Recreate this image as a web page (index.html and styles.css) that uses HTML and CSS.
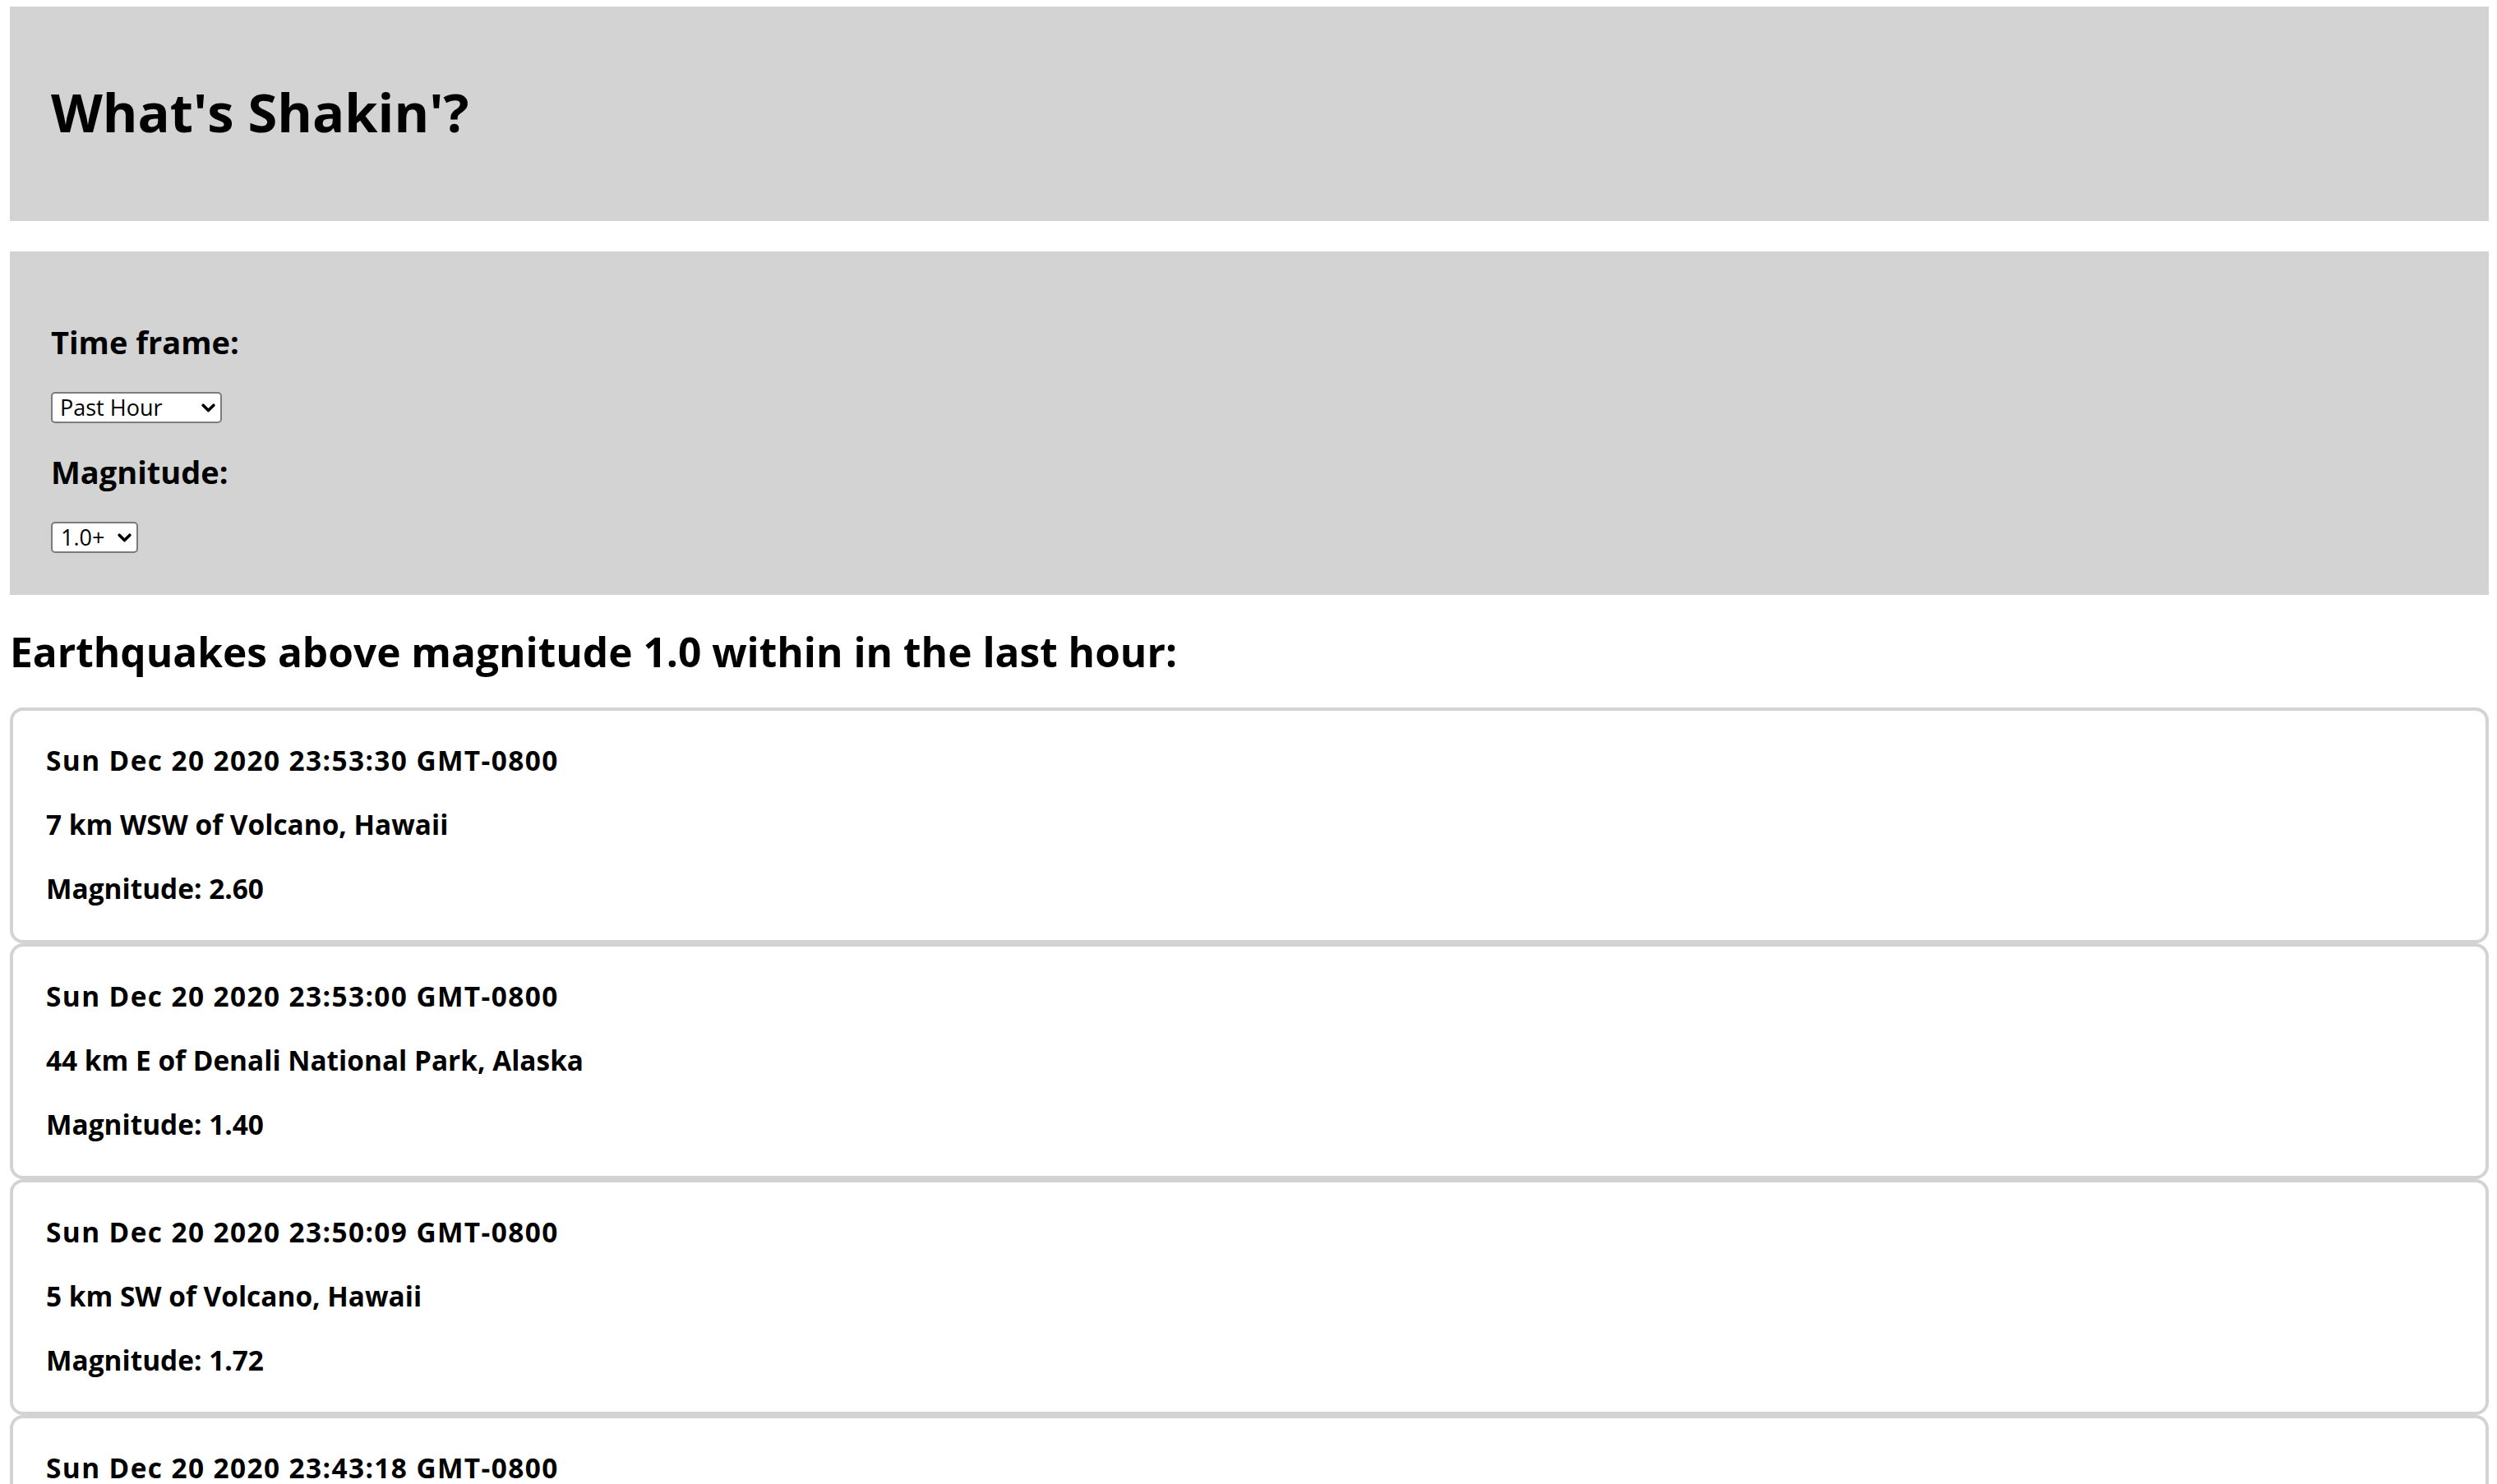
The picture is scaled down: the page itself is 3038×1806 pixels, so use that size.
FILE: index.html
```html
<!DOCTYPE html>
<html lang="en">
<head>
<meta charset="utf-8">
<title>What's Shakin'?</title>
<link rel="stylesheet" href="styles.css">
</head>
<body>
<header class="masthead">
  <h1 class="title">What's Shakin'?</h1>
</header>

<section class="controls">
  <h3 class="label">Time frame:</h3>
  <div class="select-wrap">
    <select class="sel sel-time">
      <option>Past Hour</option>
      <option>Past Day</option>
      <option>Past Week</option>
      <option>Past Month</option>
    </select>
    <svg class="chev" viewBox="0 0 17 11" width="17" height="11"><path d="M2.2 2.2 L8.5 8.5 L14.8 2.2" fill="none" stroke="#000" stroke-width="3.6" stroke-linecap="round" stroke-linejoin="round"/></svg>
  </div>
  <h3 class="label">Magnitude:</h3>
  <div class="select-wrap">
    <select class="sel sel-mag">
      <option>1.0+</option>
      <option>2.5+</option>
      <option>4.5+</option>
    </select>
    <svg class="chev" viewBox="0 0 17 11" width="17" height="11"><path d="M2.2 2.2 L8.5 8.5 L14.8 2.2" fill="none" stroke="#000" stroke-width="3.6" stroke-linecap="round" stroke-linejoin="round"/></svg>
  </div>
</section>

<h2 class="results-title">Earthquakes above magnitude 1.0 within in the last hour:</h2>

<ul class="quakes">
  <li class="quake">
    <p class="line when">Sun Dec 20 2020 23:53:30 GMT-0800</p>
    <p class="line">7 km WSW of Volcano, Hawaii</p>
    <p class="line">Magnitude: 2.60</p>
  </li>
  <li class="quake">
    <p class="line when">Sun Dec 20 2020 23:53:00 GMT-0800</p>
    <p class="line">44 km E of Denali National Park, Alaska</p>
    <p class="line">Magnitude: 1.40</p>
  </li>
  <li class="quake">
    <p class="line when">Sun Dec 20 2020 23:50:09 GMT-0800</p>
    <p class="line">5 km SW of Volcano, Hawaii</p>
    <p class="line">Magnitude: 1.72</p>
  </li>
  <li class="quake">
    <p class="line when">Sun Dec 20 2020 23:43:18 GMT-0800</p>
    <p class="line">10 km NNE of Anza, CA</p>
    <p class="line">Magnitude: 1.10</p>
  </li>
</ul>
</body>
</html>
```
FILE: styles.css
```css
html, body {
  background: #ffffff;
}

body {
  margin: 8px 10px 0 12px;
  font-family: "Open Sans", "Noto Sans", sans-serif;
  color: #000000;
}

.masthead {
  background: #d3d3d3;
  padding: 88px 50px 93px;
}

.title {
  margin: 0;
  font-size: 65px;
  line-height: 80px;
  font-weight: 700;
}

.controls {
  background: #d3d3d3;
  margin-top: 37px;
  padding: 50px 50px 51px;
}

.label {
  margin: 37.5px 0 39px;
  font-size: 38px;
  line-height: 44px;
  font-weight: 700;
}

.select-wrap {
  position: relative;
  width: fit-content;
}

.sel {
  display: block;
  -webkit-appearance: none;
  appearance: none;
  box-sizing: border-box;
  height: 38px;
  margin: 0;
  padding: 0 30px 0 9px;
  font-family: "Open Sans", "Noto Sans", sans-serif;
  font-size: 27px;
  line-height: 34px;
  color: #000000;
  background: #ffffff;
  border: 2px solid #7b7b7b;
  border-radius: 5px;
}

.sel-time {
  width: 208px;
}

.sel-mag {
  width: 106px;
  padding-left: 10px;
}

.chev {
  position: absolute;
  right: 8px;
  top: 14px;
  width: 17px;
  height: 11px;
  pointer-events: none;
}

.results-title {
  margin: 41px 0 40px;
  font-size: 49.6px;
  line-height: 56px;
  font-weight: 700;
}

.quakes {
  list-style: none;
  margin: 0;
  padding: 0;
}

.quake {
  display: flex;
  flex-direction: column;
  gap: 40px;
  padding: 41px 40px 44px;
  border: 4px solid #d3d3d3;
  border-radius: 16px;
}

.line {
  margin: 0;
  font-size: 33.4px;
  line-height: 38px;
  font-weight: 700;
}

.when {
  letter-spacing: 1.4px;
}
```
